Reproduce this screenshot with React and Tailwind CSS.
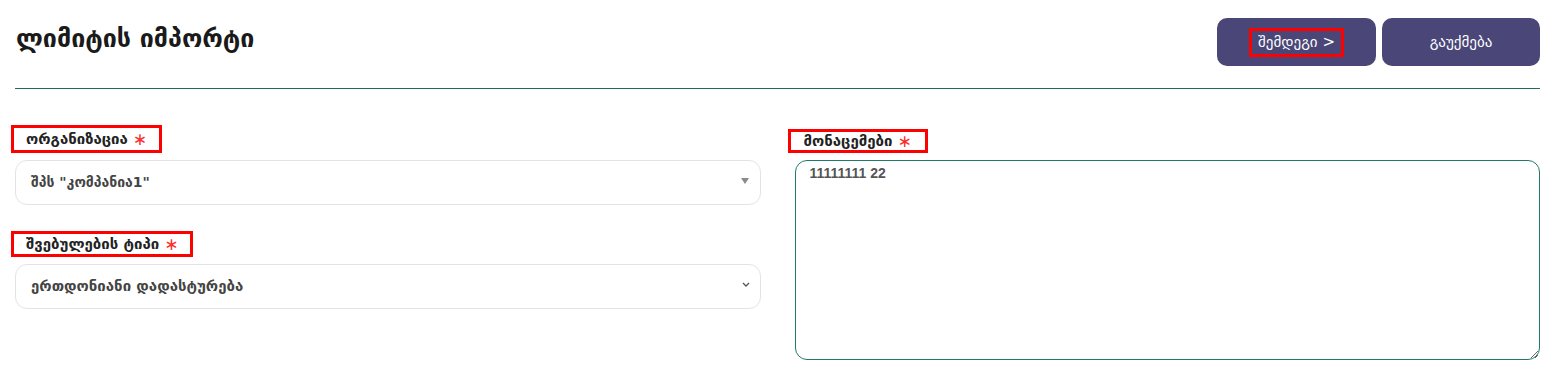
export default function App() {
  const font = "font-['DejaVu_Sans',sans-serif]"

  return (
    <div className={`${font} min-h-[369px] bg-white pl-[15px] pr-[19px] text-[#333]`}>
      {/* header */}
      <div className="flex items-start justify-between border-b border-[#1f6b5c] pt-[18px] pb-[22px]">
        <h1 className="mt-[4px] ml-px text-[25px] leading-[34px] font-bold text-[#1a1a1a]">ლიმიტის იმპორტი</h1>
        <div className="flex gap-[6px]">
          <button className="flex h-[48px] w-[159px] items-center justify-center rounded-[10px] bg-[#4a4778] text-[15px] text-white">
            <span className="border-[3px] border-[#ff0000] px-[6px] py-[3px] leading-[17px]">შემდეგი &gt;</span>
          </button>
          <button className="flex h-[48px] w-[158px] items-center justify-center rounded-[10px] bg-[#4a4778] text-[15px] text-white">
            გაუქმება
          </button>
        </div>
      </div>

      <div className="grid grid-cols-2 gap-[34px] pt-[36px]">
        {/* left column */}
        <div className="flex flex-col">
          <div>
            <span className="-ml-[4px] inline-flex items-center gap-[5px] border-[3px] border-[#ff0000] px-[12px] py-[2px] text-[15px] leading-[18px] font-bold text-[#222]">
              ორგანიზაცია <span className="text-[17px] font-normal text-[#ff2a2a]">∗</span>
            </span>
          </div>
          <div className="mt-[7px] flex h-[45px] items-center justify-between rounded-[12px] border border-[#e3e3e3] pr-[11px] pl-[15px]">
            <span className="text-[14px] font-bold text-[#444]">შპს "კომპანია1"</span>
            <svg width="8" height="6" viewBox="0 0 8 6" className="mb-[3px]">
              <path d="M0 0 H8 L4 6 Z" fill="#8a8a8a" />
            </svg>
          </div>

          <div className="mt-[26px]">
            <span className="-ml-[4px] inline-flex items-center gap-[5px] border-[3px] border-[#ff0000] px-[12px] py-[1px] text-[15px] leading-[18px] font-bold text-[#222]">
              შვებულების ტიპი <span className="text-[17px] font-normal text-[#ff2a2a]">∗</span>
            </span>
          </div>
          <div className="mt-[7px] flex h-[45px] items-center justify-between rounded-[12px] border border-[#e3e3e3] pr-[10px] pl-[15px]">
            <span className="text-[15px] font-bold text-[#444]">ერთდონიანი დადასტურება</span>
            <svg width="8" height="5" viewBox="0 0 8 5" className="mt-[-4px]">
              <path d="M1 1 L4 4 L7 1" fill="none" stroke="#555" strokeWidth="1.3" />
            </svg>
          </div>
        </div>

        {/* right column */}
        <div className="flex flex-col">
          <div className="mt-[4px]">
            <span className="-ml-[7px] inline-flex items-center gap-[5px] border-[3px] border-[#ff0000] px-[13px] py-[1px] text-[15px] leading-[16px] font-bold text-[#222]">
              მონაცემები <span className="text-[17px] font-normal text-[#ff2a2a]">∗</span>
            </span>
          </div>
          <textarea
            defaultValue="11111111 22"
            className="mt-[7px] h-[200px] resize-y rounded-[12px] border border-[#1f7a68] px-[14px] py-[2px] font-['Liberation_Sans'] text-[14px] leading-[20px] font-bold text-[#555] outline-none"
          />
        </div>
      </div>
    </div>
  )
}
